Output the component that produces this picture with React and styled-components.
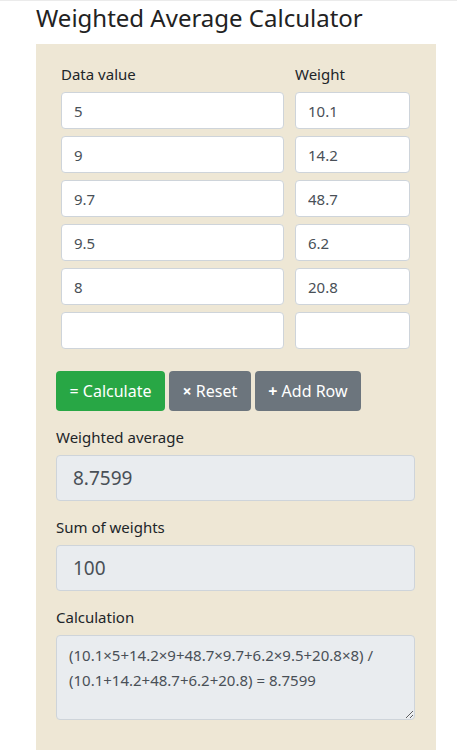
import styled, { createGlobalStyle } from "styled-components";
import { useState } from "react";

const GlobalStyle = createGlobalStyle`
    body {
        margin: 0;
        background: #FFFFFF;
        font-family: "Noto Sans", "Open Sans", sans-serif;
        color: #212529;
    }
`;

const initialRows = [
    ["5", "10.1"],
    ["9", "14.2"],
    ["9.7", "48.7"],
    ["9.5", "6.2"],
    ["8", "20.8"],
    ["", ""],
];

export default function App() {
    const [rows] = useState(initialRows);

    return (
        <Page>
            <GlobalStyle />
            <Title>Weighted Average Calculator</Title>
            <Panel>
                <DataTable>
                    <Label>Data value</Label>
                    <Label>Weight</Label>
                    {rows.map((row, i) => (
                        <>
                            <Input key={`d${i}`} defaultValue={row[0]} />
                            <Input key={`w${i}`} defaultValue={row[1]} />
                        </>
                    ))}
                </DataTable>
                <Buttons>
                    <Button color="#28A745">= Calculate</Button>
                    <Button color="#6C757D"><b>×</b> Reset</Button>
                    <Button color="#6C757D"><b>+</b> Add Row</Button>
                </Buttons>
                <Field>
                    <Label>Weighted average</Label>
                    <Output>8.7599</Output>
                </Field>
                <Field>
                    <Label>Sum of weights</Label>
                    <Output>100</Output>
                </Field>
                <Field>
                    <Label>Calculation</Label>
                    <Calc
                        readOnly
                        value="(10.1×5+14.2×9+48.7×9.7+6.2×9.5+20.8×8) / (10.1+14.2+48.7+6.2+20.8) = 8.7599"
                    />
                </Field>
            </Panel>
        </Page>
    );
}

const Page = styled.div`
    border-top: 1px solid #EBEBEB;
    min-height: 749px;
    display: flex;
    flex-direction: column;
`;

const Title = styled.h1`
    margin: 0;
    padding: 0 36px;
    height: 43px;
    display: flex;
    align-items: center;
    font-weight: 400;
    font-size: 24px;
    color: #222222;
    margin-top: -5px;
`;

const Panel = styled.div`
    margin: 5px 21px 0 36px;
    width: 400px;
    flex: 1;
    box-sizing: border-box;
    padding: 20px 21px 20px 20px;
    background: #EEE7D5;
`;

const DataTable = styled.div`
    display: grid;
    grid-template-columns: 223px 115px;
    column-gap: 11px;
    row-gap: 7px;
    padding: 0 5px;

    label {
        margin-bottom: 1px;
    }
`;

const Label = styled.label`
    display: block;
    font-size: 15px;
    line-height: 20px;
    color: #212529;
`;

const Input = styled.input`
    box-sizing: border-box;
    height: 37px;
    width: 100%;
    padding: 0 12px;
    border: 1px solid #CED4DA;
    border-radius: 4px;
    background: #FFFFFF;
    font-family: inherit;
    font-size: 15px;
    color: #495057;
    outline: none;
`;

const Buttons = styled.div`
    display: flex;
    gap: 4px;
    margin-top: 22px;
`;

const Button = styled.button`
    height: 40px;
    padding: 0 13.5px;
    border: none;
    border-radius: 4px;
    background: ${(p) => p.color};
    color: #FFFFFF;
    font-family: inherit;
    font-size: 16px;

    b {
        font-weight: 700;
    }
`;

const Field = styled.div`
    margin-top: 16px;

    &:first-of-type {
        margin-top: 17px;
    }

    ${Label} {
        margin-bottom: 8px;
    }
`;

const Output = styled.div`
    box-sizing: border-box;
    height: 46px;
    display: flex;
    align-items: center;
    padding: 0 16px;
    background: #E9ECEF;
    border: 1px solid #CED4DA;
    border-radius: 4px;
    font-size: 19px;
    color: #495057;
`;

const Calc = styled.textarea`
    display: block;
    box-sizing: border-box;
    width: 100%;
    height: 85px;
    padding: 7px 12px;
    background: #E9ECEF;
    border: 1px solid #CED4DA;
    border-radius: 4px;
    font-family: inherit;
    font-size: 15px;
    line-height: 25px;
    color: #495057;
    outline: none;
`;
